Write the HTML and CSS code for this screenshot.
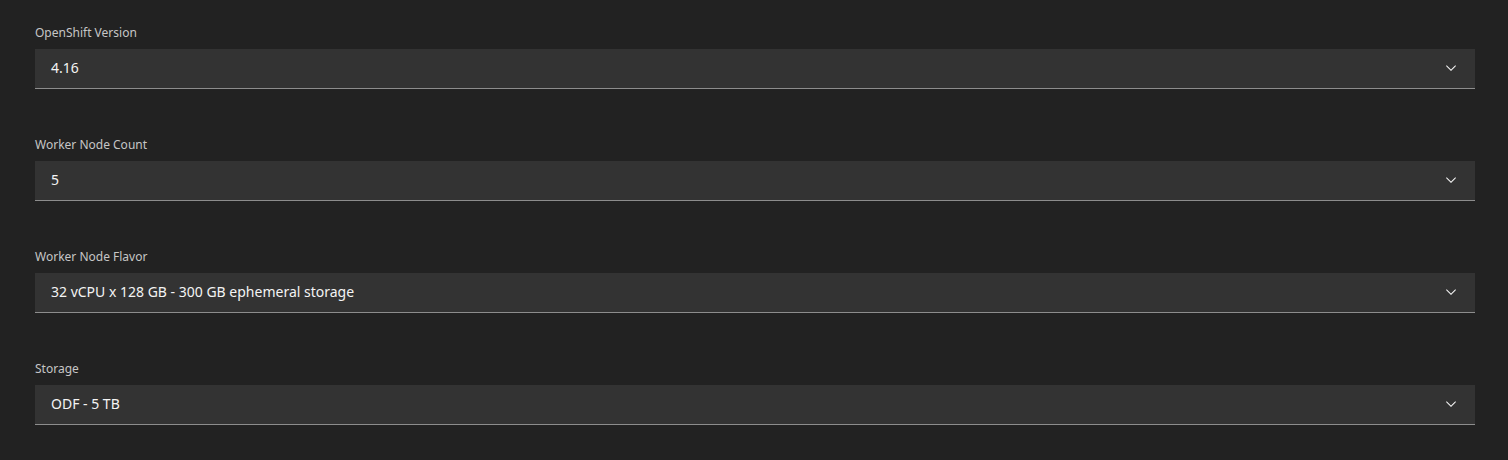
FILE: index.html
```html
<!DOCTYPE html>
<html lang="en">
<head>
<meta charset="utf-8">
<link rel="stylesheet" href="styles.css">
</head>
<body>
<div class="form">
  <div class="field">
    <label class="label">OpenShift Version</label>
    <div class="select"><span class="value">4.16</span>
      <svg class="chev" width="16" height="16" viewBox="0 0 16 16"><path d="M8 11L3 6 3.7 5.3 8 9.6 12.3 5.3 13 6z" fill="currentColor"/></svg>
    </div>
  </div>
  <div class="field">
    <label class="label">Worker Node Count</label>
    <div class="select"><span class="value">5</span>
      <svg class="chev" width="16" height="16" viewBox="0 0 16 16"><path d="M8 11L3 6 3.7 5.3 8 9.6 12.3 5.3 13 6z" fill="currentColor"/></svg>
    </div>
  </div>
  <div class="field">
    <label class="label">Worker Node Flavor</label>
    <div class="select"><span class="value">32 vCPU x 128 GB - 300 GB ephemeral storage</span>
      <svg class="chev" width="16" height="16" viewBox="0 0 16 16"><path d="M8 11L3 6 3.7 5.3 8 9.6 12.3 5.3 13 6z" fill="currentColor"/></svg>
    </div>
  </div>
  <div class="field">
    <label class="label">Storage</label>
    <div class="select"><span class="value">ODF - 5 TB</span>
      <svg class="chev" width="16" height="16" viewBox="0 0 16 16"><path d="M8 11L3 6 3.7 5.3 8 9.6 12.3 5.3 13 6z" fill="currentColor"/></svg>
    </div>
  </div>
</div>
</body>
</html>
```
FILE: styles.css
```css
html, body {
  margin: 0;
  padding: 0;
  background: #222222;
  height: 100%;
}
body {
  font-family: "Noto Sans", "Open Sans", sans-serif;
}
.form {
  display: flex;
  flex-direction: column;
  gap: 48px;
  padding: 25px 33px 0 35px;
}
.field {
  display: flex;
  flex-direction: column;
  gap: 8px;
}
.label {
  font-size: 12px;
  line-height: 16px;
  color: #c6c6c6;
}
.select {
  box-sizing: border-box;
  height: 40px;
  background: #333333;
  border-bottom: 1px solid #8d8d8d;
  display: flex;
  align-items: center;
  justify-content: space-between;
  padding: 0 16px 1px 16px;
}
.value {
  font-size: 14px;
  line-height: 18px;
  color: #f4f4f4;
}
.chev {
  color: #f4f4f4;
  display: block;
}
```
